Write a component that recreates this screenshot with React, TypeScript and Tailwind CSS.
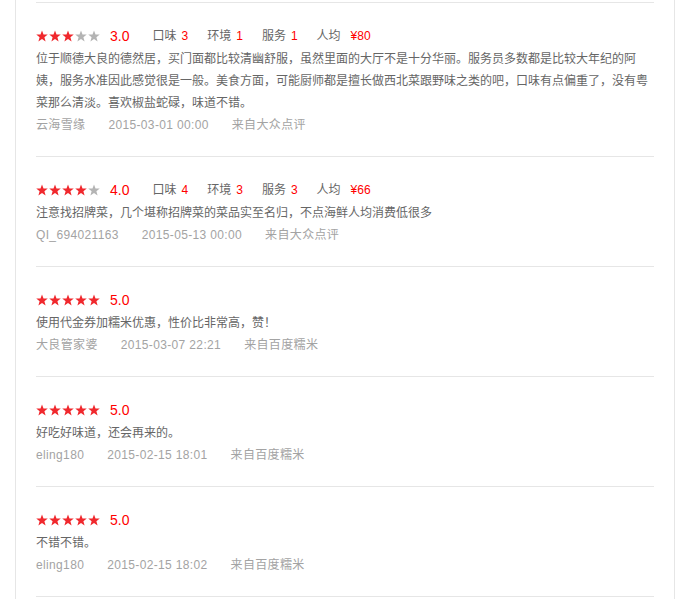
type Review = {
  score: number;
  taste?: number;
  env?: number;
  service?: number;
  avg?: string;
  text: string;
  user: string;
  date: string;
  source: string;
};

const reviews: Review[] = [
  {
    score: 3,
    taste: 3,
    env: 1,
    service: 1,
    avg: "¥80",
    text: "位于顺德大良的德然居，买门面都比较清幽舒服，虽然里面的大厅不是十分华丽。服务员多数都是比较大年纪的阿姨，服务水准因此感觉很是一般。美食方面，可能厨师都是擅长做西北菜跟野味之类的吧，口味有点偏重了，没有粤菜那么清淡。喜欢椒盐蛇碌，味道不错。",
    user: "云海雪缘",
    date: "2015-03-01 00:00",
    source: "来自大众点评",
  },
  {
    score: 4,
    taste: 4,
    env: 3,
    service: 3,
    avg: "¥66",
    text: "注意找招牌菜，几个堪称招牌菜的菜品实至名归，不点海鲜人均消费低很多",
    user: "QI_694021163",
    date: "2015-05-13 00:00",
    source: "来自大众点评",
  },
  {
    score: 5,
    text: "使用代金券加糯米优惠，性价比非常高，赞！",
    user: "大良管家婆",
    date: "2015-03-07 22:21",
    source: "来自百度糯米",
  },
  {
    score: 5,
    text: "好吃好味道，还会再来的。",
    user: "eling180",
    date: "2015-02-15 18:01",
    source: "来自百度糯米",
  },
  {
    score: 5,
    text: "不错不错。",
    user: "eling180",
    date: "2015-02-15 18:02",
    source: "来自百度糯米",
  },
];

function Star({ on }: { on: boolean }) {
  return (
    <svg width="12" height="12" viewBox="0 0 24 24" className={on ? "fill-[#f0282d]" : "fill-[#b4b4b4]"}>
      <polygon points="12,1 15,9 23.5,9.2 16.8,14.4 19.2,22.8 12,17.8 4.8,22.8 7.2,14.4 0.5,9.2 9,9" />
    </svg>
  );
}

function SubRating({ label, value, gap = 5 }: { label: string; value: number | string; gap?: number }) {
  return (
    <span className="ml-[19px]">
      {label}
      <span className={`${gap === 5 ? "ml-[5px]" : "ml-[10px]"} text-[#ff0000]`}>{value}</span>
    </span>
  );
}

function ReviewItem({ r }: { r: Review }) {
  return (
    <div className="border-t border-[#e6e6e6] pt-[23px] pb-[20px]">
      <div className="flex h-[20px] items-center text-[12px] text-[#666]">
        <div className="flex gap-[1px]">
          {[1, 2, 3, 4, 5].map((i) => (
            <Star key={i} on={i <= r.score} />
          ))}
        </div>
        <span className="ml-[10px] mr-[4px] text-[14px] text-[#ff0000]">{r.score.toFixed(1)}</span>
        {r.taste !== undefined && (
          <>
            <SubRating label="口味" value={r.taste} />
            <SubRating label="环境" value={r.env ?? 0} />
            <SubRating label="服务" value={r.service ?? 0} />
            <SubRating label="人均" value={r.avg ?? ""} gap={9} />
          </>
        )}
      </div>
      <p className="mt-[2px] text-[12px] leading-[22px] text-[#666]">{r.text}</p>
      <div className="flex gap-[23px] text-[12px] leading-[22px] tracking-[0.35px] text-[#a3a3a3]">
        <span>{r.user}</span>
        <span>{r.date}</span>
        <span>{r.source}</span>
      </div>
    </div>
  );
}

export default function App() {
  return (
    <div className="min-h-[599px] bg-white font-['Liberation_Sans','Noto_Sans_CJK_SC',sans-serif]">
      <div className="ml-[15px] w-[660px] min-h-[599px] border-x border-[#e6e6e6] px-[20px] pt-[2px]">
        <div className="border-b border-[#e6e6e6]">
          {reviews.map((r, i) => (
            <ReviewItem key={i} r={r} />
          ))}
        </div>
      </div>
    </div>
  );
}
